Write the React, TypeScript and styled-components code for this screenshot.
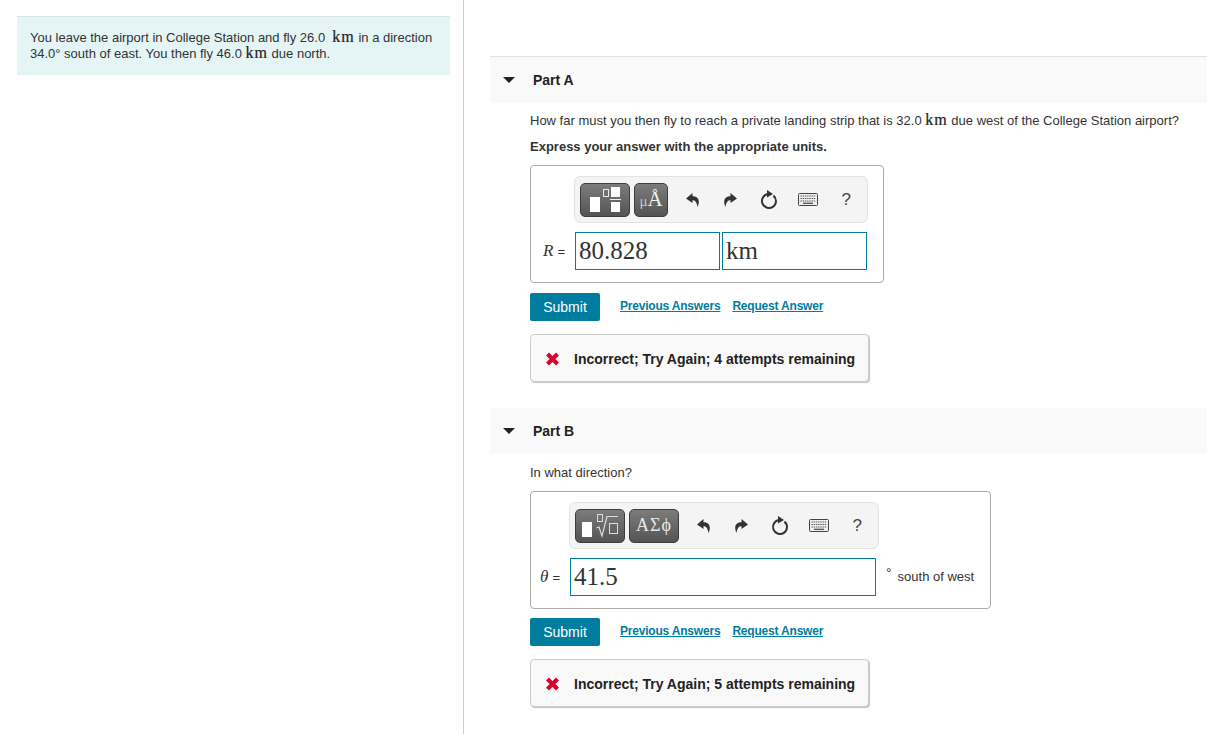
import React from "react";
import styled, { createGlobalStyle } from "styled-components";

const GlobalStyle = createGlobalStyle`
  html, body {
    margin: 0;
    padding: 0;
    background: #fff;
    font-family: "Liberation Sans", Arial, sans-serif;
    color: #333;
  }
  * {
    box-sizing: border-box;
  }
`;

const Page = styled.div`
  display: flex;
  width: 1207px;
  height: 734px;
  overflow: hidden;
`;

const LeftColumn = styled.div`
  width: 464px;
  flex-shrink: 0;
  padding: 16px 13px 0 17px;
  border-right: 1px solid #c5cdd5;
`;

const Intro = styled.div`
  height: 59px;
  padding: 13px 13px 0;
  background: #e5f5f6;
  border-top: 1px solid #d9e3e5;
  font-size: 13px;
  line-height: 16px;
  color: #333;
  white-space: nowrap;
`;

const Km = styled.span`
  font-family: "Liberation Serif", serif;
  font-size: 16px;
  line-height: 0;
  letter-spacing: 1px;
  -webkit-text-stroke: 0.2px currentColor;
  color: #222;
`;

const RightColumn = styled.div`
  flex: 1;
  padding: 56px 0 0 26px;
`;

const PartHeader = styled.div<{ $ruled?: boolean; $top?: number }>`
  display: flex;
  align-items: center;
  height: ${({ $ruled }) => ($ruled ? 47 : 46)}px;
  margin-top: ${({ $top }) => $top ?? 0}px;
  padding-left: 13px;
  background: #f9f9f9;
  border-top: ${({ $ruled }) => ($ruled ? "1px solid #e2e2e2" : "none")};
`;

const Caret = styled.span`
  width: 0;
  height: 0;
  margin-right: 18px;
  border-left: 6px solid transparent;
  border-right: 6px solid transparent;
  border-top: 6px solid #222;
`;

const PartTitle = styled.span`
  font-size: 14px;
  font-weight: bold;
  color: #222;
`;

const PartBody = styled.div<{ $top: number }>`
  padding: ${({ $top }) => $top}px 0 0 40px;
`;

const Question = styled.div`
  font-size: 13px;
  line-height: 20px;
  color: #333;
  white-space: nowrap;
`;

const Instruction = styled.div`
  margin-top: 6px;
  font-size: 13px;
  font-weight: bold;
  line-height: 20px;
  color: #333;
`;

const AnswerBox = styled.div<{ $width: number; $top: number }>`
  width: ${({ $width }) => $width}px;
  height: 118px;
  margin-top: ${({ $top }) => $top}px;
  padding: 10px 0 0;
  border: 1px solid #aaa;
  border-radius: 4px;
`;

const Toolbar = styled.div<{ $left: number; $width: number }>`
  display: flex;
  align-items: center;
  width: ${({ $width }) => $width}px;
  height: 47px;
  margin-left: ${({ $left }) => $left}px;
  padding-left: 5px;
  background: #f4f4f4;
  border: 1px solid #e2e2e2;
  border-radius: 6px;
`;

const ToolButton = styled.div<{ $width: number }>`
  display: flex;
  align-items: center;
  justify-content: center;
  width: ${({ $width }) => $width}px;
  height: 34px;
  margin-right: 4px;
  background: linear-gradient(#7c7c7c, #545454);
  border: 1px solid #3d3d3d;
  border-radius: 5px;
  color: #e8e8e8;
  font-family: "Liberation Serif", serif;
  font-size: 18px;
  letter-spacing: 1px;
  white-space: nowrap;
`;

const UnitGlyphs = styled.span`
  font-size: 21px;
  letter-spacing: 0;
  color: #f2f2f2;

  small {
    font-size: 15px;
    color: #c8c8c8;
  }
`;

const ToolIcons = styled.div`
  display: flex;
  align-items: center;
  margin-left: 1px;
`;

const IconSlot = styled.div`
  display: flex;
  align-items: center;
  justify-content: center;
  width: 38.5px;
  height: 34px;
`;

const HelpMark = styled.span`
  font-size: 17px;
  color: #444;
`;

const InputRow = styled.div`
  display: flex;
  align-items: center;
  height: 38px;
  margin-top: 9px;
`;

const VarLabel = styled.div<{ $width: number }>`
  display: flex;
  justify-content: flex-end;
  align-items: baseline;
  gap: 4px;
  width: ${({ $width }) => $width}px;
  padding-right: 10px;
  font-size: 13px;
  color: #333;

  i {
    font-family: "Liberation Serif", serif;
    font-size: 17px;
  }
`;

const MathInput = styled.div<{ $width: number }>`
  width: ${({ $width }) => $width}px;
  height: 38px;
  margin-right: 2px;
  padding-left: 3px;
  border: 1px solid #007c9f;
  font-family: "Liberation Serif", serif;
  font-size: 25px;
  line-height: 35px;
  color: #333;
`;

const Suffix = styled.div`
  display: flex;
  margin-left: 8px;
  font-size: 13px;
  line-height: 16px;
  color: #333;

  sup {
    margin: -3px 6px 0 0;
    font-size: 14px;
    line-height: 14px;
  }
`;

const Actions = styled.div<{ $top: number }>`
  display: flex;
  align-items: center;
  height: 28px;
  margin-top: ${({ $top }) => $top}px;
`;

const SubmitButton = styled.button`
  width: 70px;
  height: 28px;
  margin-right: 20px;
  padding: 0;
  border: none;
  border-radius: 2px;
  background: #007c9f;
  color: #fff;
  font-family: inherit;
  font-size: 14px;
`;

const ActionLink = styled.a`
  margin: -3px 12px 0 0;
  color: #007c9f;
  font-size: 12px;
  font-weight: bold;
  letter-spacing: -0.2px;
  text-decoration: underline;
`;

const Feedback = styled.div<{ $top: number }>`
  display: flex;
  align-items: center;
  width: 339px;
  height: 48px;
  margin-top: ${({ $top }) => $top}px;
  padding: 2px 0 0 14px;
  background: #f9f9f9;
  border: 1px solid #ccc;
  border-radius: 4px;
  box-shadow: 1px 1px 1px #c4c4c4;
  font-size: 14px;
  font-weight: bold;
  color: #222;
`;

const CrossIcon = styled.svg`
  flex-shrink: 0;
  margin-right: 14px;
`;

const UndoIcon = ({ flip }: { flip?: boolean }) => (
  <svg
    width="13"
    height="14"
    viewBox="0 0 13 14"
    style={flip ? { transform: "scaleX(-1)" } : undefined}
  >
    <path
      d="M6.5 0 L0 5.4 L6.5 10 L6.5 7.2 C9 7.2 10.8 9 11.6 14 C13.6 9.6 13.8 3.2 6.5 3.2 Z"
      fill="#333"
    />
  </svg>
);

const ResetIcon = () => (
  <svg width="18" height="20" viewBox="0 1 18 20">
    <path
      d="M13.4 6.6 A7 7 0 1 1 8 5.1"
      fill="none"
      stroke="#333"
      strokeWidth="2"
    />
    <path d="M7 1 L13 5 L7 8.6 Z" fill="#333" />
  </svg>
);

const KeyboardIcon = () => (
  <svg width="20" height="13" viewBox="0 0 20 13">
    <rect x="0.5" y="0.5" width="19" height="12" rx="1" fill="#eee" stroke="#444" />
    <path
      d="M2.5 3H17.5M2.5 5.5H17.5M2.5 8H17.5"
      stroke="#555"
      strokeWidth="1.2"
      strokeDasharray="1.4 0.8"
    />
    <path d="M5 10.3H15" stroke="#444" strokeWidth="1.2" />
  </svg>
);

const TemplatesIcon = () => (
  <svg width="31" height="26" viewBox="0 0 31 26">
    <rect x="0" y="10" width="10" height="15" fill="#fff" />
    <rect x="13.5" y="2.5" width="5" height="7" fill="none" stroke="#eee" />
    <rect x="21" y="0" width="9" height="10" fill="#fff" />
    <rect x="20" y="12" width="11" height="1" fill="#eee" />
    <rect x="21" y="15" width="9" height="10" fill="#fff" />
  </svg>
);

const RadicalIcon = () => (
  <svg width="36" height="24" viewBox="0 0 36 24">
    <rect x="0" y="8" width="10" height="15" fill="#fff" />
    <rect x="15.5" y="0.5" width="5" height="7" fill="none" stroke="#ddd" />
    <path d="M14.5 14 L17 13 L20 22 L25 2.5 H36" fill="none" stroke="#ddd" strokeWidth="1.2" />
    <rect x="27.5" y="9.5" width="8" height="10" fill="none" stroke="#ddd" />
  </svg>
);

const HistoryIcons = () => (
  <ToolIcons>
    <IconSlot>
      <UndoIcon />
    </IconSlot>
    <IconSlot>
      <UndoIcon flip />
    </IconSlot>
    <IconSlot>
      <ResetIcon />
    </IconSlot>
    <IconSlot>
      <KeyboardIcon />
    </IconSlot>
    <IconSlot>
      <HelpMark>?</HelpMark>
    </IconSlot>
  </ToolIcons>
);

const FeedbackNote = ({ attempts, top }: { attempts: number; top: number }) => (
  <Feedback $top={top}>
    <CrossIcon width="15" height="14" viewBox="0 0 15 14">
      <path d="M2.5 2 L12.5 12 M12.5 2 L2.5 12" stroke="#d9002b" strokeWidth="4" fill="none" />
    </CrossIcon>
    Incorrect; Try Again; {attempts} attempts remaining
  </Feedback>
);

const SubmitRow = ({ top }: { top: number }) => (
  <Actions $top={top}>
    <SubmitButton>Submit</SubmitButton>
    <ActionLink>Previous Answers</ActionLink>
    <ActionLink>Request Answer</ActionLink>
  </Actions>
);

export default function App() {
  return (
    <Page>
      <GlobalStyle />
      <LeftColumn>
        <Intro>
          You leave the airport in College Station and fly 26.0&nbsp; <Km>km</Km> in a direction
          <br />
          34.0° south of east. You then fly 46.0 <Km>km</Km> due north.
        </Intro>
      </LeftColumn>
      <RightColumn>
        <section>
          <PartHeader $ruled>
            <Caret />
            <PartTitle>Part A</PartTitle>
          </PartHeader>
          <PartBody $top={8}>
            <Question>
              How far must you then fly to reach a private landing strip that is 32.0 <Km>km</Km> due
              west of the College Station airport?
            </Question>
            <Instruction>Express your answer with the appropriate units.</Instruction>
            <AnswerBox $width={354} $top={8}>
              <Toolbar $left={43} $width={294}>
                <ToolButton $width={50}>
                  <TemplatesIcon />
                </ToolButton>
                <ToolButton $width={34}>
                  <UnitGlyphs>
                    <small>μ</small>Å
                  </UnitGlyphs>
                </ToolButton>
                <HistoryIcons />
              </Toolbar>
              <InputRow>
                <VarLabel $width={44}>
                  <i>R</i> =
                </VarLabel>
                <MathInput $width={145}>80.828</MathInput>
                <MathInput $width={145}>km</MathInput>
              </InputRow>
            </AnswerBox>
            <SubmitRow top={10} />
            <FeedbackNote attempts={4} top={13} />
          </PartBody>
        </section>
        <section>
          <PartHeader $top={26}>
            <Caret />
            <PartTitle>Part B</PartTitle>
          </PartHeader>
          <PartBody $top={9}>
            <Question>In what direction?</Question>
            <AnswerBox $width={461} $top={8}>
              <Toolbar $left={38} $width={310}>
                <ToolButton $width={50}>
                  <RadicalIcon />
                </ToolButton>
                <ToolButton $width={50}>ΑΣϕ</ToolButton>
                <HistoryIcons />
              </Toolbar>
              <InputRow>
                <VarLabel $width={39}>
                  <i>θ</i> =
                </VarLabel>
                <MathInput $width={306}>41.5</MathInput>
                <Suffix>
                  <sup>°</sup> south of west
                </Suffix>
              </InputRow>
            </AnswerBox>
            <SubmitRow top={9} />
            <FeedbackNote attempts={5} top={13} />
          </PartBody>
        </section>
      </RightColumn>
    </Page>
  );
}
